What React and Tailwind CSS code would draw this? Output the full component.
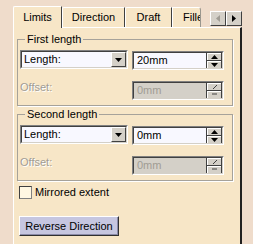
const FONT = { fontFamily: '"Liberation Sans", Arial, sans-serif' };

function Sunken({ className = '', children }) {
  // classic 2px sunken edge
  return (
    <div className={`border border-t-[#808080] border-l-[#808080] border-b-white border-r-white ${className}`}>
      <div className="h-full border border-t-[#404040] border-l-[#404040] border-b-[#d4d0c8] border-r-[#d4d0c8]">
        {children}
      </div>
    </div>
  );
}

function Combo() {
  return (
    <Sunken className="w-[108px] h-[19px]">
      <div className="flex h-full bg-[#f8f8ff]">
        <span className="flex-1 pl-[2px] text-[11px] leading-[15px] text-black">Length:</span>
        <div className="w-[15px] h-full bg-[#d4d0c8] border border-t-white border-l-white border-b-[#404040] border-r-[#404040] flex items-center justify-center">
          <svg width="7" height="4" viewBox="0 0 7 4"><path d="M0 0h7L3.5 4z" fill="#000" /></svg>
        </div>
      </div>
    </Sunken>
  );
}

function SpinBtn({ dir, disabled }) {
  return (
    <div className="h-[7px] w-[14px] bg-[#d4d0c8] border-t border-l border-t-white border-l-white flex items-center justify-center">
      {disabled ? (
        <svg width="6" height="4" viewBox="0 0 6 4">
          <path d={dir === 'up' ? 'M1 4L5 0' : 'M0 1h5'} stroke="#404040" strokeWidth="1" fill="none" />
        </svg>
      ) : (
        <svg width="7" height="4" viewBox="0 0 7 4">
          <path d={dir === 'up' ? 'M0 4h7L3.5 0z' : 'M0 0h7L3.5 4z'} fill="#000" />
        </svg>
      )}
    </div>
  );
}

function Spin({ value, disabled }) {
  return (
    <Sunken className="w-[92px] h-[19px]">
      <div className={`flex h-full ${disabled ? 'bg-[#d4d0c8]' : 'bg-[#f8f8ff]'}`}>
        <span className={`flex-1 pl-[3px] text-[11px] leading-[15px] ${disabled ? 'text-[#a09c94]' : 'text-black'}`}>{value}</span>
        <div className="w-[16px] bg-[#404040] flex flex-col justify-center gap-[1px] pl-px">
          <SpinBtn dir="up" disabled={disabled} />
          <SpinBtn dir="down" disabled={disabled} />
        </div>
      </div>
    </Sunken>
  );
}

function Group({ title, value, className = '' }) {
  return (
    <fieldset className={`ml-[3px] w-[216px] border border-[#a6a29a] shadow-[1px_1px_0_#fff] ${className}`}>
      <legend className="ml-[7px] px-[2px] text-[11px] leading-[13px] text-black">{title}</legend>
      <div className="pl-[2px] pt-[4px] pb-[5px] flex flex-col">
        <div className="flex items-start gap-[4px]">
          <Combo />
          <div className="mt-[1px]"><Spin value={value} /></div>
        </div>
        <div className="flex items-start mt-[11px]">
          <span className="w-[112px] text-[11px] leading-[13px] text-[#a09c94] [text-shadow:1px_1px_0_#fff]">Offset:</span>
          <Spin value="0mm" disabled />
        </div>
      </div>
    </fieldset>
  );
}

function Tab({ label, active, w }) {
  return (
    <div
      className={`relative shrink-0 flex items-center justify-center text-[11px] text-black bg-[#f7e6c7] border-t border-l border-t-white border-l-white border-r border-r-[#404040] rounded-tl-[2px] ${w} ${
        active ? 'h-[22px] z-10 -mb-px border-b-0' : 'h-[20px]'
      }`}
    >
      {label}
    </div>
  );
}

export default function App() {
  return (
    <div className="w-[253px] h-[244px] bg-[#efdccb] overflow-hidden" style={FONT}>
      {/* tab strip */}
      <div className="ml-[13px] w-[229px] flex items-end pt-[5px] h-[27px]">
        <Tab label="Limits" active w="w-[49px]" />
        <Tab label="Direction" w="w-[63px]" />
        <Tab label="Draft" w="w-[47px]" />
        <div className="shrink-0 w-[29px] h-[20px] overflow-hidden bg-[#f7e6c7] border-t border-l border-r border-t-white border-l-white border-r-[#9a968e] rounded-tr-[3px]">
          <div className="w-[40px] h-full flex items-center pl-[10px] text-[11px] text-black whitespace-nowrap">
            Fillet
          </div>
        </div>
        <div className="ml-auto shrink-0 flex mb-[1px]">
          {['left', 'right'].map((d) => (
            <div key={d} className="w-[16px] h-[15px] bg-[#d4d0c8] border border-t-white border-l-white border-b-[#404040] border-r-[#404040] flex items-center justify-center">
              <svg width="4" height="7" viewBox="0 0 4 7">
                <path d={d === 'left' ? 'M4 0v7L0 3.5z' : 'M0 0v7l4-3.5z'} fill={d === 'left' ? '#a09c94' : '#000'} />
              </svg>
            </div>
          ))}
        </div>
      </div>

      {/* panel */}
      <div className="ml-[13px] w-[229px] h-[220px] bg-[#f7e6c7] border-t border-l border-t-white border-l-white border-r-2 border-r-[#202020] pt-[5px]">
        <Group title="First length" value="20mm" />
        <Group title="Second length" value="0mm" className="mt-[2px]" />
        <label className="flex items-center ml-[5px] mt-[5px] gap-[3px]">
          <span className="w-[13px] h-[13px] bg-[#fff7e2] border border-t-[#404040] border-l-[#404040] border-b-[#808080] border-r-[#808080]" />
          <span className="text-[11px] leading-[13px] text-black">Mirrored extent</span>
        </label>
        <button className="ml-[5px] mt-[17px] w-[100px] h-[20px] bg-[#c6c6e0] border border-t-white border-l-white border-b-[#303030] border-r-[#303030] shadow-[inset_-1px_-1px_0_#8a8aa8] text-[11px] leading-[16px] text-black">
          Reverse Direction
        </button>
      </div>
    </div>
  );
}
